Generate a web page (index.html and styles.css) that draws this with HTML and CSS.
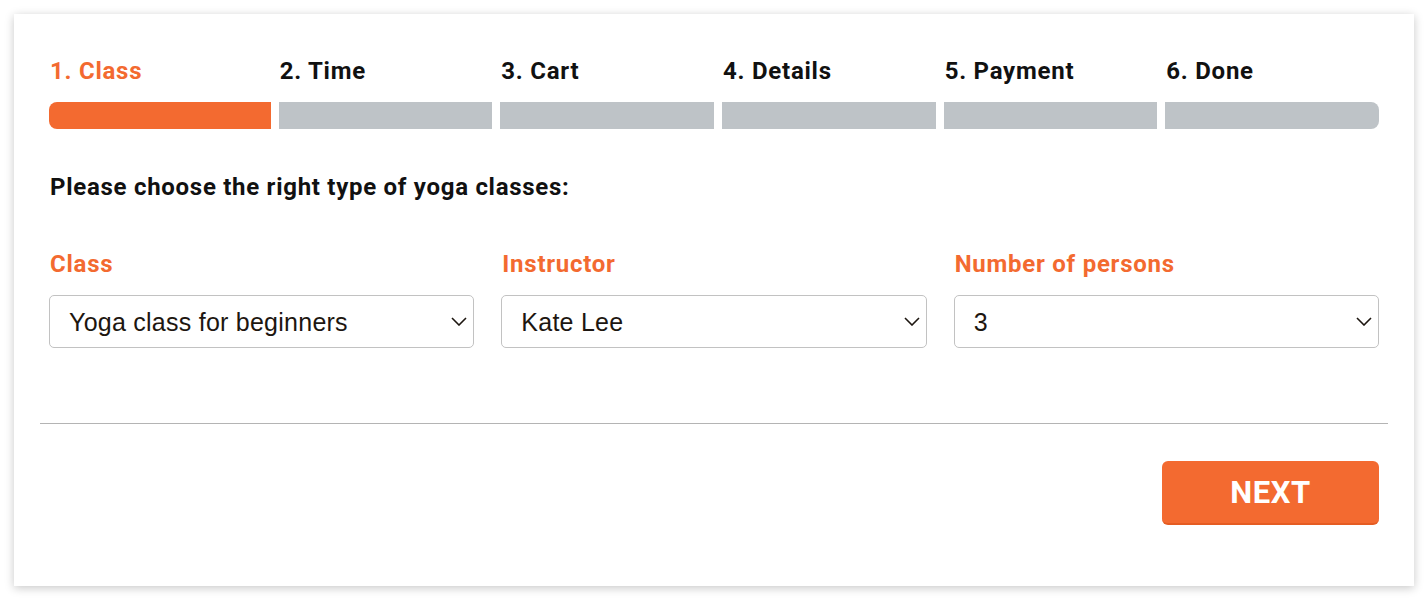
FILE: index.html
```html
<!DOCTYPE html>
<html lang="en">
<head>
    <meta charset="UTF-8">
    <meta name="viewport" content="width=device-width, initial-scale=1.0">
    <title>Yoga Booking - Class</title>
    <link rel="stylesheet" href="styles.css">
</head>
<body>

    <div class="card">
        <div class="steps">
            <div class="step active">
                <div class="step-label">1. Class</div>
                <div class="step-bar"></div>
            </div>
            <div class="step">
                <div class="step-label">2. Time</div>
                <div class="step-bar"></div>
            </div>
            <div class="step">
                <div class="step-label">3. Cart</div>
                <div class="step-bar"></div>
            </div>
            <div class="step">
                <div class="step-label">4. Details</div>
                <div class="step-bar"></div>
            </div>
            <div class="step">
                <div class="step-label">5. Payment</div>
                <div class="step-bar"></div>
            </div>
            <div class="step">
                <div class="step-label">6. Done</div>
                <div class="step-bar"></div>
            </div>
        </div>

        <h2 class="intro">Please choose the right type of yoga classes:</h2>

        <div class="fields">
            <div class="field">
                <label class="field-label" for="class">Class</label>
                <div class="select-wrap">
                    <select id="class">
                        <option>Yoga class for beginners</option>
                    </select>
                    <svg class="chevron" width="16" height="9" viewBox="0 0 16 9"><path d="M1 1l7 7 7-7" fill="none" stroke="#1d1610" stroke-width="1.6"/></svg>
                </div>
            </div>
            <div class="field">
                <label class="field-label" for="instructor">Instructor</label>
                <div class="select-wrap">
                    <select id="instructor">
                        <option>Kate Lee</option>
                    </select>
                    <svg class="chevron" width="16" height="9" viewBox="0 0 16 9"><path d="M1 1l7 7 7-7" fill="none" stroke="#1d1610" stroke-width="1.6"/></svg>
                </div>
            </div>
            <div class="field">
                <label class="field-label" for="persons">Number of persons</label>
                <div class="select-wrap">
                    <select id="persons">
                        <option>3</option>
                    </select>
                    <svg class="chevron" width="16" height="9" viewBox="0 0 16 9"><path d="M1 1l7 7 7-7" fill="none" stroke="#1d1610" stroke-width="1.6"/></svg>
                </div>
            </div>
        </div>

        <hr class="divider">

        <div class="actions">
            <button class="next-btn" type="button">NEXT</button>
        </div>
    </div>

</body>
</html>
```

FILE: styles.css
```css
body {
    margin: 0;
    padding: 14px;
    background-color: #ffffff;
    font-family: Roboto, "Liberation Sans", Arial, sans-serif;
    color: #111;
}
.card {
    background-color: white;
    padding: 43px 35px 61px;
    box-shadow: 0 2px 9px rgba(0, 0, 0, 0.22);
}
.steps {
    display: grid;
    grid-template-columns: repeat(6, 1fr);
}
.step + .step {
    padding-left: 8px;
}
.step-label {
    font-size: 24px;
    line-height: 28px;
    font-weight: 700;
    letter-spacing: 0.75px;
    padding-left: 1px;
    color: #111;
}
.step.active .step-label {
    color: #f36a30;
}
.step-bar {
    height: 27px;
    margin-top: 17px;
    background-color: #bec3c7;
}
.step.active .step-bar {
    background-color: #f36a30;
}
.step:first-child .step-bar {
    border-radius: 8px 0 0 8px;
}
.step:last-child .step-bar {
    border-radius: 0 8px 8px 0;
}
.intro {
    margin: 44px 0 0;
    font-size: 24px;
    line-height: 28px;
    font-weight: 700;
    letter-spacing: 0.72px;
    padding-left: 1px;
    color: #111;
}
.fields {
    display: grid;
    grid-template-columns: repeat(3, 1fr);
    column-gap: 27px;
    margin-top: 49px;
}
.field-label {
    display: block;
    font-size: 24px;
    line-height: 28px;
    font-weight: 700;
    letter-spacing: 0.75px;
    color: #f36a30;
    padding-left: 1px;
}
.select-wrap {
    position: relative;
    margin-top: 17px;
}
.select-wrap select {
    appearance: none;
    -webkit-appearance: none;
    display: block;
    width: 100%;
    height: 53px;
    margin: 0;
    padding: 0 40px 0 19px;
    border: 1.5px solid #c2c2c2;
    border-radius: 5px;
    background-color: white;
    font-family: "Liberation Sans", Arial, sans-serif;
    font-size: 25px;
    letter-spacing: 0.25px;
    color: #1d1610;
}
.chevron {
    position: absolute;
    right: 7px;
    top: 22px;
    pointer-events: none;
}
.divider {
    border: none;
    height: 1px;
    background-color: #b4b4b4;
    margin: 75px -9px 0;
}
.actions {
    display: flex;
    justify-content: flex-end;
    margin-top: 37px;
}
.next-btn {
    width: 217px;
    height: 64px;
    border: none;
    border-bottom: 2px solid #e55c22;
    border-radius: 6px;
    background-color: #f36a30;
    color: white;
    font-family: Roboto, "Liberation Sans", Arial, sans-serif;
    font-size: 31px;
    font-weight: 700;
    letter-spacing: 0.6px;
    padding: 0;
    cursor: pointer;
}
```
